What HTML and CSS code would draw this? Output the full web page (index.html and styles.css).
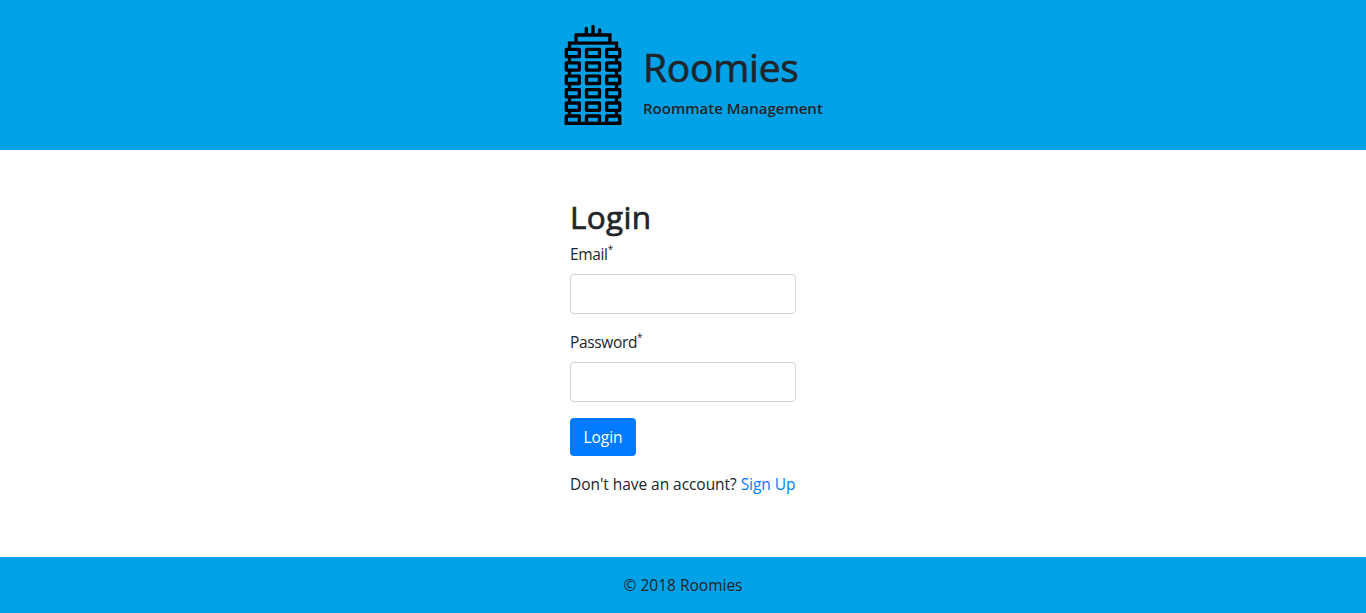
FILE: index.html
```html
<!DOCTYPE html>
<html lang="en">
<head>
<meta charset="utf-8">
<title>Roomies</title>
<link rel="stylesheet" href="styles.css">
</head>
<body>
<header class="header">
  <svg class="logo" viewBox="0 0 60 102" width="60" height="102" fill="none" stroke="#000" stroke-width="3.3" aria-hidden="true">
    <defs>
      <g id="floor" stroke-linejoin="round">
        <rect x="3.3" y="0" width="13" height="7.3"/>
        <rect x="23.5" y="0" width="13" height="7.3"/>
        <rect x="43.7" y="0" width="13" height="7.3"/>
      </g>
    </defs>
    <path d="M23.3 10V4.4M30 10V2.4M36.7 10V6" stroke-linecap="round"/>
    <path d="M13.1 19V11h33.8v8M6.5 25.5V19.1h47v6.4"/>
    <use href="#floor" y="25.4"/>
    <use href="#floor" y="38.8"/>
    <use href="#floor" y="52.2"/>
    <use href="#floor" y="65.6"/>
    <use href="#floor" y="79"/>
    <use href="#floor" y="92"/>
    <path d="M6.5 33v6M6.5 46.5v6M6.5 60v6M6.5 73v6M6.5 86.5v6M53.5 33v6M53.5 46.5v6M53.5 60v6M53.5 73v6M53.5 86.5v6M1.7 99.3h56.6"/>
  </svg>
  <div class="brand">
    <h1 class="brand-name">Roomies</h1>
    <p class="tagline">Roommate Management</p>
  </div>
</header>
<main class="main">
  <form class="form">
    <h2 class="title">Login</h2>
    <label class="label" for="email"><span class="email">Email</span><sup>*</sup></label>
    <input class="input" id="email" type="email">
    <label class="label" for="password"><span class="password">Password</span><sup>*</sup></label>
    <input class="input" id="password" type="password">
    <button class="button" type="submit">Login</button>
    <p class="signup"><span class="question">Don't have an account?</span> <a class="link" href="#">Sign Up</a></p>
  </form>
</main>
<footer class="footer">© 2018 Roomies</footer>
</body>
</html>
```
FILE: styles.css
```css
* { box-sizing: border-box; }
body {
  margin: 0;
  min-height: 613px;
  display: flex;
  flex-direction: column;
  font: 15.5px/24px "Open Sans", sans-serif;
  color: #212529;
  background: #fff;
}
.header {
  height: 150px;
  padding: 24px 0 0 563px;
  display: flex;
  gap: 20px;
  background: #00a1e6;
}
.logo { flex: none; }
.brand { padding-top: 19px; }
.brand-name {
  margin: 0 0 8px;
  font-size: 39px;
  line-height: 48px;
  font-weight: 400;
  letter-spacing: -0.25px;
  -webkit-text-stroke: 0.6px currentColor;
}
.tagline {
  margin: 0;
  font-size: 15px;
  line-height: 19px;
  font-weight: 600;
  white-space: nowrap;
}
.main {
  flex: 1;
  display: flex;
  justify-content: center;
  padding-top: 48px;
}
.form { width: 226px; }
.title {
  margin: 0 0 6px;
  font-size: 31.5px;
  line-height: 38px;
  font-weight: 400;
  letter-spacing: 0.3px;
  -webkit-text-stroke: 0.7px currentColor;
}
.label {
  display: block;
  height: 24px;
  margin-bottom: 8px;
  letter-spacing: -0.35px;
  white-space: nowrap;
}
sup {
  font-size: 10px;
  line-height: 0;
  vertical-align: baseline;
  position: relative;
  top: -7px;
}
.input {
  display: block;
  width: 226px;
  height: 40px;
  margin: 0 0 16px;
  padding: 6px 12px;
  border: 1px solid #ced4da;
  border-radius: 4px;
  background: #fff;
}
.button {
  display: block;
  width: 66px;
  height: 38px;
  margin: 0 0 16px;
  padding: 0;
  border: 0;
  border-radius: 4px;
  background: #007bff;
  color: #fff;
  font: inherit;
}
.signup { margin: 0; letter-spacing: -0.05px; white-space: nowrap; }
.link { color: #007bff; text-decoration: none; }
.footer {
  height: 56px;
  padding: 16px 0;
  text-align: center;
  background: #00a1e6;
}
```
